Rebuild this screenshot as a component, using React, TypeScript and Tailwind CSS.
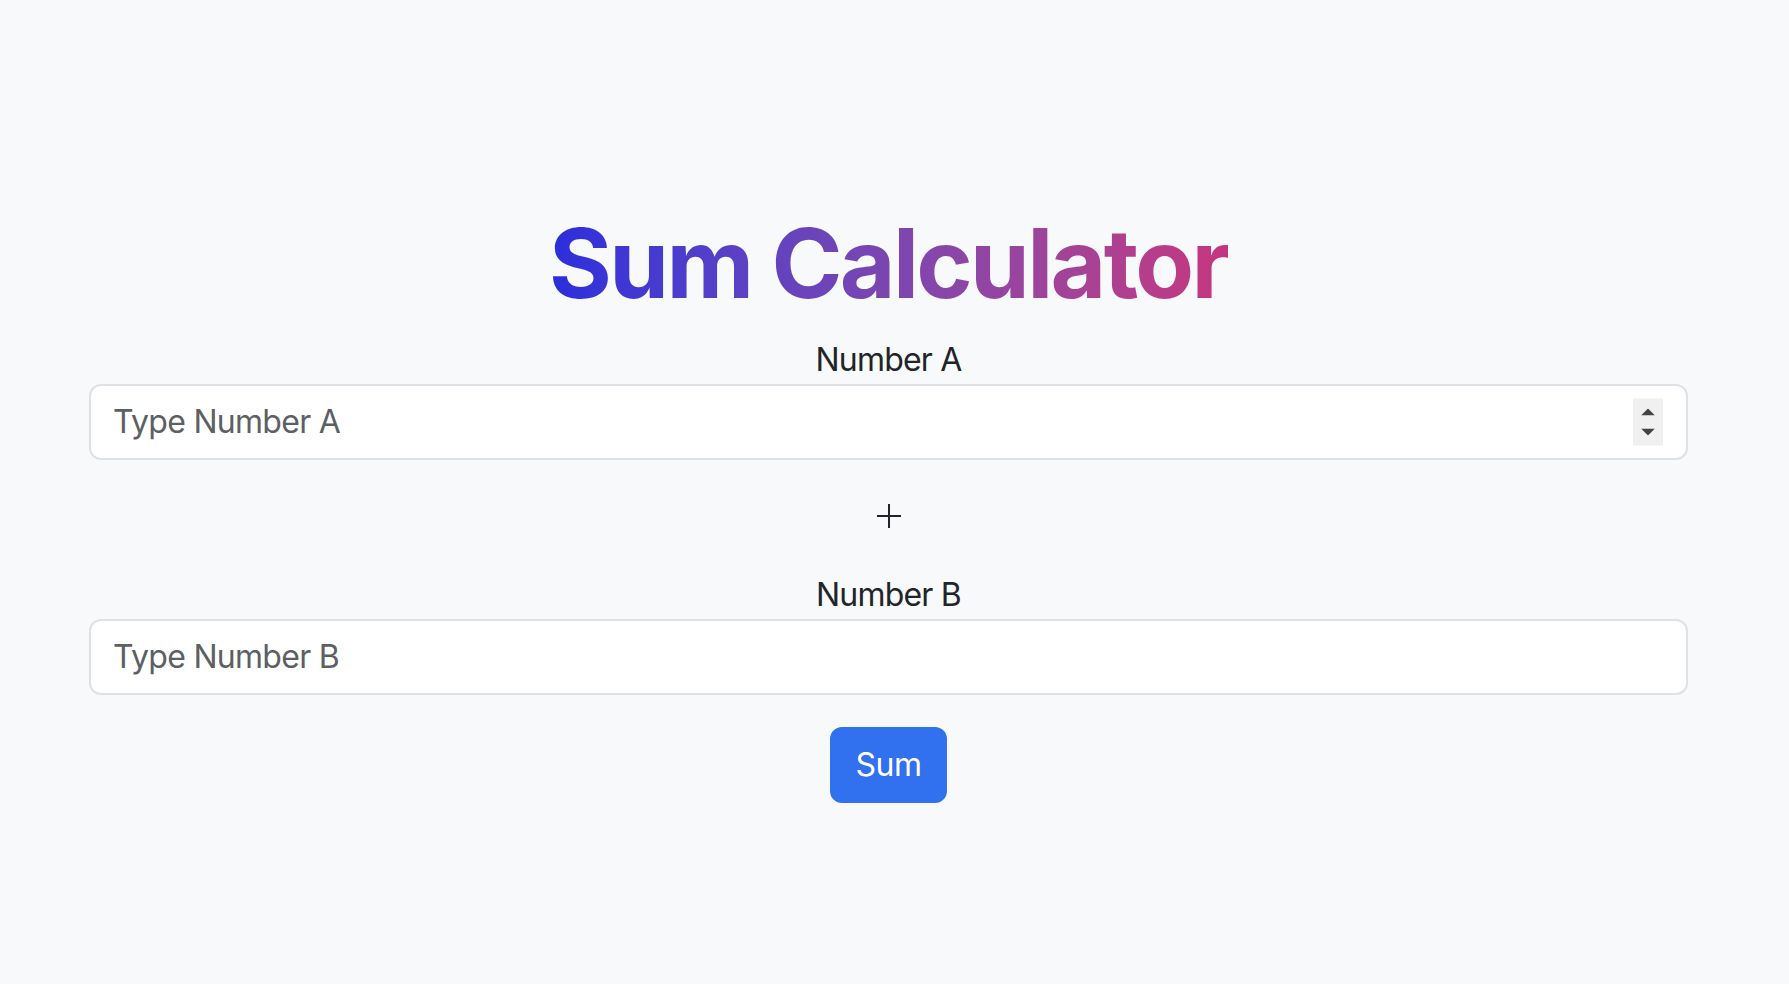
import { useState } from "react";

function Spinner() {
    return (
        <div className="absolute right-[25px] top-1/2 -translate-y-1/2 flex h-[47px] w-[30px] flex-col items-center justify-center gap-[13px] bg-[#f0f0f0]">
            <svg width="14" height="7" viewBox="0 0 14 7">
                <path d="M7 0 L14 7 L0 7 Z" fill="#444" />
            </svg>
            <svg width="14" height="7" viewBox="0 0 14 7">
                <path d="M0 0 L14 0 L7 7 Z" fill="#444" />
            </svg>
        </div>
    );
}

export default function App() {
    const [a, setA] = useState("");
    const [b, setB] = useState("");
    const [result, setResult] = useState<number | null>(null);

    const inputCls =
        "w-full rounded-[12px] border-2 border-[#dee2e6] bg-white px-[22px] py-[12px] text-[32px] leading-[48px] tracking-[-0.7px] text-[#212529] placeholder-[#5c5f63] outline-none";

    return (
        <div
            className="min-h-screen bg-[#f8f9fa] pl-[89px] pr-[101px] pt-[206px] text-[#212529]"
            style={{ fontFamily: "Inter, 'Noto Sans', sans-serif" }}
        >
            <div className="flex flex-col items-center">
                {/* Title */}
                <h1 className="mb-[15px] w-fit bg-linear-to-r from-[#2a2ddd] to-[#c6357f] bg-clip-text text-8xl leading-[1.2] font-bold tracking-[-2.65px] text-transparent">
                    Sum Calculator
                </h1>

                <label className="text-[32px] leading-[48px] tracking-[-0.8px]">Number A</label>
                <div className="relative w-full">
                    <input
                        type="text"
                        inputMode="numeric"
                        value={a}
                        onChange={(e) => setA(e.target.value)}
                        placeholder="Type Number A"
                        className={inputCls}
                    />
                    <Spinner />
                </div>

                {/* Plus sign */}
                <div className="flex h-[111px] items-center justify-center">
                    <svg width="24" height="24" viewBox="0 0 24 24">
                        <path d="M12 0 V24 M0 12 H24" stroke="#212529" strokeWidth="2" />
                    </svg>
                </div>

                <label className="text-[32px] leading-[48px] tracking-[-0.8px]">Number B</label>
                <input
                    type="text"
                    inputMode="numeric"
                    value={b}
                    onChange={(e) => setB(e.target.value)}
                    placeholder="Type Number B"
                    className={inputCls}
                />

                <button
                    onClick={() => setResult((Number(a) || 0) + (Number(b) || 0))}
                    className="mt-8 rounded-[12px] border-2 border-[#3170ef] bg-[#3170ef] px-[24px] py-[12px] text-[32px] leading-[48px] tracking-[-0.5px] text-white"
                >
                    Sum
                </button>

                {result !== null && (
                    <p className="mt-6 text-[32px] leading-[48px]">Result: {result}</p>
                )}
            </div>
        </div>
    );
}
